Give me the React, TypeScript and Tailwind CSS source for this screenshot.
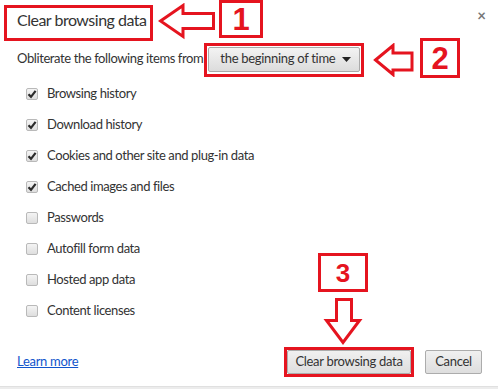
import React from "react";

const items = [
  { label: "Browsing history", checked: true },
  { label: "Download history", checked: true },
  { label: "Cookies and other site and plug-in data", checked: true },
  { label: "Cached images and files", checked: true },
  { label: "Passwords", checked: false },
  { label: "Autofill form data", checked: false },
  { label: "Hosted app data", checked: false },
  { label: "Content licenses", checked: false },
];

const RED = "#e5141f";

function Check({ checked }: { checked: boolean }) {
  return (
    <div className="w-[12px] h-[12px] rounded-[2px] border border-[#b9b9b9] bg-gradient-to-b from-[#f4f4f4] to-[#dedede] flex items-center justify-center shrink-0">
      {checked && (
        <svg width="10" height="10" viewBox="0 0 10 10">
          <path d="M1.5 5.2 L4 7.8 L8.6 1.8" fill="none" stroke="#2b2b2b" strokeWidth="2.2" />
        </svg>
      )}
    </div>
  );
}

export default function App() {
  return (
    <div
      className="relative w-[498px] h-[389px] bg-white overflow-hidden text-[#333] whitespace-nowrap"
      style={{ fontFamily: 'Lato, "Noto Sans", sans-serif' }}
    >
      {/* Title */}
      <div className="h-[40px] flex items-center pl-[17px] pr-[12px] justify-between">
        <span className="text-[16px] tracking-[-0.5px] text-[#333]">Clear browsing data</span>
        <span className="text-[#777] text-[15px] font-bold leading-none -mt-[10px]">×</span>
      </div>

      {/* Time range */}
      <div className="h-[38px] flex items-center pl-[17px]">
        <span className="text-[13px] tracking-[-0.4px]">Obliterate the following items from</span>
        <div className="ml-[5px] w-[152px] shrink-0 h-[25px] border border-[#a9a9a9] rounded-[2px] bg-gradient-to-b from-[#f3f3f3] to-[#dcdcdc] flex items-center pl-[11px] pr-[8px] justify-between">
          <span className="text-[13px] tracking-[-0.3px]">the beginning of time</span>
          <svg width="9" height="5" viewBox="0 0 9 5">
            <path d="M0 0 H9 L4.5 5 Z" fill="#222" />
          </svg>
        </div>
      </div>

      {/* Checkboxes */}
      <div className="flex flex-col">
        {items.map((it) => (
          <div key={it.label} className="h-[31px] flex items-center pl-[26px] gap-[9px]">
            <Check checked={it.checked} />
            <span className="text-[13px] tracking-[-0.4px]">{it.label}</span>
          </div>
        ))}
      </div>

      {/* Footer */}
      <div className="mt-[21px] h-[30px] flex items-center pl-[17px] pr-[16px]">
        <a className="text-[13px] tracking-[-0.3px] text-[#1155cc] underline">Learn more</a>
        <div className="ml-auto flex items-center gap-[14px]">
          <button className="w-[124px] h-[24px] border border-[#acacac] rounded-[2px] bg-gradient-to-b from-[#f0f0f0] to-[#dedede] text-[13px] tracking-[-0.3px] text-[#333]">
            Clear browsing data
          </button>
          <button className="w-[57px] h-[24px] border border-[#acacac] rounded-[2px] bg-gradient-to-b from-[#f0f0f0] to-[#dedede] text-[13px] tracking-[-0.3px] text-[#333]">
            Cancel
          </button>
        </div>
      </div>
      <div className="absolute left-0 right-0 bottom-0 h-[3px] bg-[#ececec] border-t border-[#e0e0e0]" />

      {/* Annotations */}
      <div className="absolute left-[4px] top-[5px] w-[149px] h-[36px] border-[3px] border-[#e5141f]" />
      <svg className="absolute left-[158px] top-[3px]" width="58" height="38" viewBox="0 0 58 38">
        <path d="M2.5 18 L25 2.5 L25 10.5 L55.5 10.5 L55.5 25.5 L25 25.5 L25 33.5 Z" fill="white" stroke={RED} strokeWidth="3" strokeLinejoin="miter" />
      </svg>
      <div className="absolute left-[219px] top-[0px] w-[44px] h-[38px] border-[3px] border-[#e5141f] flex items-center justify-center">
        <span className="text-[31px] font-bold leading-none text-[#e5141f]" style={{ fontFamily: '"Liberation Sans", Arial, sans-serif' }}>1</span>
      </div>

      <div className="absolute left-[204px] top-[43px] w-[160px] h-[34px] border-[3px] border-[#e5141f]" />
      <svg className="absolute left-[373px] top-[43px]" width="42" height="34" viewBox="0 0 42 34">
        <path d="M2.5 17 L20 2.5 L20 10 L39 10 L39 27 L20 27 L20 31.5 Z" fill="white" stroke={RED} strokeWidth="3" />
      </svg>
      <div className="absolute left-[420px] top-[38px] w-[40px] h-[40px] border-[3px] border-[#e5141f] flex items-center justify-center">
        <span className="text-[31px] font-bold leading-none text-[#e5141f]" style={{ fontFamily: '"Liberation Sans", Arial, sans-serif' }}>2</span>
      </div>

      <div className="absolute left-[318px] top-[253px] w-[50px] h-[39px] border-[3px] border-[#e5141f] flex items-center justify-center">
        <span className="text-[26px] font-bold leading-none text-[#e5141f]" style={{ fontFamily: '"Liberation Sans", Arial, sans-serif' }}>3</span>
      </div>
      <svg className="absolute left-[323px] top-[297px]" width="40" height="48" viewBox="0 0 40 48">
        <path d="M13.5 2.5 L28.5 2.5 L28.5 23.5 L36.5 23.5 L20 45.5 L3.5 23.5 L13.5 23.5 Z" fill="white" stroke={RED} strokeWidth="3" />
      </svg>
      <div className="absolute left-[284px] top-[347px] w-[130px] h-[30px] border-[3px] border-[#e5141f]" />
    </div>
  );
}
